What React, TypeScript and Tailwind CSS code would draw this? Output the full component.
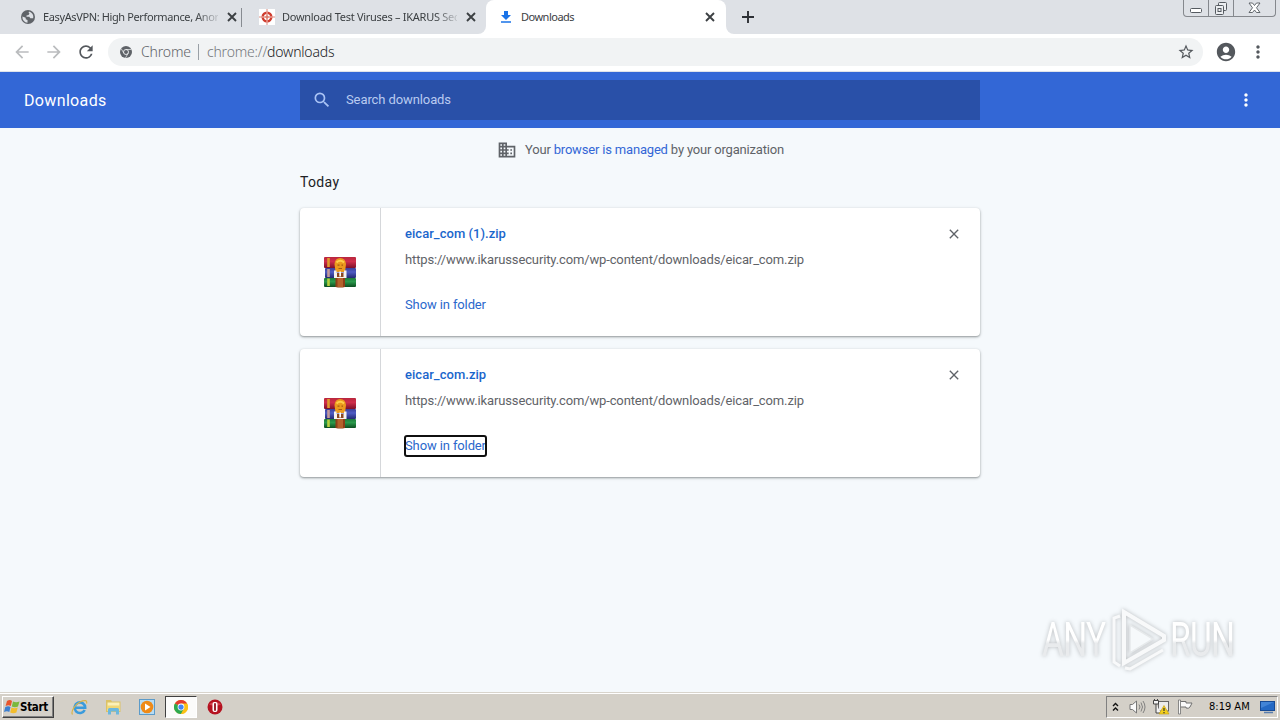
import React from 'react';
import {
  MdAccountCircle,
  MdArrowBack,
  MdArrowForward,
  MdClose,
  MdDomain,
  MdMoreVert,
  MdRefresh,
  MdSearch,
  MdStarBorder,
} from 'react-icons/md';

interface DownloadItem {
  name: string;
  url: string;
  focused?: boolean;
}

const downloads: DownloadItem[] = [
  {
    name: 'eicar_com (1).zip',
    url: 'https://www.ikarussecurity.com/wp-content/downloads/eicar_com.zip',
  },
  {
    name: 'eicar_com.zip',
    url: 'https://www.ikarussecurity.com/wp-content/downloads/eicar_com.zip',
    focused: true,
  },
];

function GlobeIcon() {
  return (
    <svg width="14" height="14" viewBox="0 0 14 14">
      <circle cx="7" cy="7" r="7" fill="#5f6368" />
      <path d="M8 1.500q-1 1.500.5 2l-1 1.500-2 .5v1.300h2.800l1 1.500h2.900A5.600 5.600 0 0 0 8 1.500z" fill="#dee1e6" />
      <path d="M1.400 6.500l3.300 1.200v1.500l1.800.8v2.700A5.600 5.600 0 0 1 1.400 6.500z" fill="#dee1e6" />
    </svg>
  );
}

function IkarusIcon() {
  return (
    <svg width="16" height="16" viewBox="0 0 16 16" fill="none">
      <rect width="16" height="16" fill="#fff" />
      <path d="M8 0v16M0 8h16" stroke="#dc8a7c" strokeWidth="1" />
      <circle cx="8" cy="8" r="4.300" stroke="#cf3c2e" strokeWidth="2.400" />
      <path d="M8 2.500v3M8 10.500v3M2.500 8h3M10.500 8h3" stroke="#f4cfc8" strokeWidth="1" />
      <path d="M8 5.500v5M5.500 8h5" stroke="#d9705f" strokeWidth="1" />
    </svg>
  );
}

function DownloadTabIcon() {
  return (
    <svg width="12" height="12" viewBox="0 0 12 12" fill="#1a73e8">
      <path d="M4 0h4v4h3L6 9 1 4h3zM1 10.300h10v1.500H1z" />
    </svg>
  );
}

function ChromeMono() {
  return (
    <svg width="12" height="12" viewBox="0 0 12 12">
      <circle cx="6" cy="6" r="6" fill="#5f6368" />
      <circle cx="6" cy="6" r="2.500" fill="none" stroke="#f1f3f4" strokeWidth="0.900" />
      <path d="M6 3.500h5.400M3.850 7.200L1.200 2.700M8.150 7.200L5.500 11.900" stroke="#f1f3f4" strokeWidth="0.700" />
    </svg>
  );
}

function ChromeColor() {
  return (
    <svg width="14" height="14" viewBox="0 0 24 24">
      <circle cx="12" cy="12" r="12" fill="#fbc116" />
      <path d="M12 12L1.600 6A12 12 0 0 1 22.400 6z" fill="#e33b2e" />
      <path d="M12 12L1.600 6A12 12 0 0 0 12 24l5-9z" fill="#2da94f" />
      <path d="M12 6h10.400A12 12 0 0 1 12 24l5.200-9z" fill="#fbc116" />
      <circle cx="12" cy="12" r="5.800" fill="#fff" />
      <circle cx="12" cy="12" r="4.500" fill="#4285f4" />
    </svg>
  );
}

function WinRarIcon() {
  return (
    <svg width="32" height="32" viewBox="0 0 32 32">
      <defs>
        <linearGradient id="rar-red" x2="0" y2="1">
          <stop stopColor="#b8263c" />
          <stop offset="0.4" stopColor="#d02f4c" />
          <stop offset="1" stopColor="#7d1028" />
        </linearGradient>
        <linearGradient id="rar-blue" x2="0" y2="1">
          <stop stopColor="#3a3f98" />
          <stop offset="0.4" stopColor="#4f5cc4" />
          <stop offset="1" stopColor="#222a72" />
        </linearGradient>
        <linearGradient id="rar-green" x2="0" y2="1">
          <stop stopColor="#1d7a3a" />
          <stop offset="0.4" stopColor="#2b9a4c" />
          <stop offset="1" stopColor="#0d4d20" />
        </linearGradient>
      </defs>
      <rect x="0" y="1" width="32" height="11" rx="1" fill="url(#rar-red)" />
      <rect x="1" y="12" width="31" height="10" rx="1" fill="url(#rar-blue)" />
      <rect x="0" y="22" width="32" height="9" rx="1" fill="url(#rar-green)" />
      <path d="M4.500 2v9" stroke="#e09a2c" strokeWidth="2.600" />
      <path d="M4.500 13v8" stroke="#c39a9a" strokeWidth="2.600" />
      <path d="M4.500 22.500v7.500" stroke="#b9cf3c" strokeWidth="2.600" />
      <path d="M11.500 20h9.500v11q-4.800 1-9.500 0z" fill="#8f3f18" />
      <path d="M13.500 22h5.500v9h-5.500z" fill="#b4622c" />
      <path d="M10.500 8q.5-6 5.700-6T22 8l-1 8h-9.500z" fill="#eb9a1e" />
      <path d="M12.500 6.500q3.700-3.500 7.500 0" stroke="#ffd04a" strokeWidth="2" fill="none" />
      <path d="M13.500 8.500h2v1.300h-2zM17.500 8.500h1.500v1.300h-1.500zM14.500 12h3.500v1h-3.500z" fill="#a55c10" />
      <path d="M10 14.500h2.500v2h7.500v-2h2.500V22H10z" fill="#f6f3f0" />
      <path d="M13 17h6.500v4H13z" fill="#8b4720" />
      <path d="M15.300 15.500H17v5h-1.700z" fill="#fff" />
    </svg>
  );
}

function TabCross() {
  return (
    <svg width="14" height="14" viewBox="0 0 14 14" stroke="#3c4043" strokeWidth="1.900" className="ml-[7px] shrink-0">
      <path d="M3 3l8 8M11 3l-8 8" />
    </svg>
  );
}

function Tab({
  icon,
  title,
  titleClass = '',
  className,
}: {
  icon: React.ReactNode;
  title: string;
  titleClass?: string;
  className: string;
}) {
  return (
    <div className={`flex h-[34px] items-center ${className}`}>
      <span className="flex w-4 shrink-0 justify-center">{icon}</span>
      <span className={`ml-[7px] w-[175px] shrink-0 whitespace-nowrap text-[11px] text-[#3c4043] ${titleClass}`}>
        {title}
      </span>
      <TabCross />
    </div>
  );
}

const fade = '[mask-image:linear-gradient(to_right,#000_153px,transparent_179px)]';

function TabStrip() {
  return (
    <div className="flex h-[34px] bg-white font-['Noto_Sans',sans-serif]">
      <Tab
        icon={<GlobeIcon />}
        title="EasyAsVPN: High Performance, Anon"
        titleClass={`tracking-[-0.38px] ${fade}`}
        className="w-[241px] bg-[#dee1e6] pl-5"
      />
      <div className="bg-[#dee1e6] pt-2">
        <div className="h-[19px] w-px bg-[#878b91]" />
      </div>
      <Tab
        icon={<IkarusIcon />}
        title="Download Test Viruses – IKARUS Sec"
        titleClass={`tracking-[-0.28px] ${fade}`}
        className="w-[244px] rounded-br-lg bg-[#dee1e6] pl-[17px]"
      />
      <div className="bg-[#dee1e6]">
        <Tab
          icon={<DownloadTabIcon />}
          title="Downloads"
          titleClass="tracking-[-0.5px]"
          className="w-60 rounded-t-lg bg-white pl-3"
        />
      </div>
      <div className="flex flex-1 rounded-bl-lg bg-[#dee1e6]">
        <svg width="18" height="18" viewBox="0 0 18 18" stroke="#2d3035" strokeWidth="1.900" className="ml-[13px] mt-2">
          <path d="M9 3v12M3 9h12" />
        </svg>
        <div className="ml-auto mr-1 flex h-[17px] rounded-b border border-t-0 border-[#85888d]">
          <div className="flex w-[25px] justify-center border-r border-[#85888d]">
            <svg width="13" height="16" viewBox="0 0 13 16" fill="#fff" stroke="#555a60">
              <rect x="0.500" y="8.500" width="11" height="4" rx="1" />
            </svg>
          </div>
          <div className="flex w-[25px] justify-center border-r border-[#85888d]">
            <svg width="14" height="16" viewBox="0 0 14 16" fill="#eceef1" stroke="#555a60">
              <rect x="4.500" y="2.500" width="8" height="8" rx="1" />
              <rect x="1.500" y="5.500" width="8" height="9" rx="1" />
              <rect x="4" y="8.500" width="3" height="3" />
            </svg>
          </div>
          <div className="flex w-[41px] justify-center">
            <svg width="13" height="16" viewBox="0 0 13 16" fill="#fff" stroke="#555a60" strokeWidth="0.900">
              <path d="M1 3h3.500L6.500 5.500 8.500 3H12L8.500 7.800 12 12.500H8.500L6.500 10l-2 2.500H1l3.500-4.700z" />
            </svg>
          </div>
        </div>
      </div>
    </div>
  );
}

function Toolbar() {
  return (
    <div className="flex h-[38px] items-center border-b border-[#dfe3ea] bg-white pb-[2px] pl-3 font-['Noto_Sans',sans-serif]">
      <MdArrowBack size={20} className="text-[#babcbe]" />
      <MdArrowForward size={20} className="ml-3 text-[#babcbe]" />
      <MdRefresh size={20} className="ml-3 text-[#54585d]" />
      <div className="ml-3 flex h-7 w-[1095px] items-center rounded-full bg-[#f1f3f4] pl-3 text-[14px] font-light">
        <ChromeMono />
        <span className="ml-[9px] w-[49px] whitespace-nowrap tracking-[-0.15px] text-[#5f6368]">Chrome</span>
        <span className="ml-2 h-4 w-px bg-[#9aa0a6]" />
        <span className="ml-2 whitespace-nowrap tracking-[-0.2px] text-[#74787c]">
          chrome://<span className="text-[#202124]">downloads</span>
        </span>
        <MdStarBorder size={18} className="ml-auto mr-2 text-[#54585d]" />
      </div>
      <MdAccountCircle size={22} className="ml-3 text-[#54585d]" />
      <MdMoreVert size={20} className="ml-[11px] text-[#54585d]" />
    </div>
  );
}

function DownloadCard({ item }: { item: DownloadItem }) {
  return (
    <div className="flex h-32 rounded bg-white shadow-[0_1px_2px_rgba(60,64,67,0.45),0_1px_3px_1px_rgba(60,64,67,0.1)]">
      <div className="flex w-[81px] items-center justify-center border-r border-[#d5d7da]">
        <WinRarIcon />
      </div>
      <div className="flex flex-1 flex-col items-start pl-6 pt-4 text-[13px] leading-5">
        <a className="font-medium tracking-[0.03px] text-[#1a66cc]">{item.name}</a>
        <span className="mt-[6px] whitespace-nowrap tracking-[-0.13px] text-[#5f6368]">{item.url}</span>
        <a
          className={`mt-[25px] whitespace-nowrap tracking-[-0.12px] text-[#2b68cc] ${item.focused ? 'rounded-[2px] outline-2 -outline-offset-1 outline-[#101010]' : ''}`}
        >
          Show in folder
        </a>
      </div>
      <MdClose size={16} className="mr-[18px] mt-[18px] text-[#5f6368]" />
    </div>
  );
}

function MarkText({ children }: { children: string }) {
  return (
    <span className="w-[64px]">
      <span className="inline-block origin-left scale-x-[0.7] bg-linear-to-b from-white from-50% to-[#e9ebed] to-55% bg-clip-text tracking-[-1px] text-transparent">
        {children}
      </span>
    </span>
  );
}

// semi-transparent overlay in the lower right corner
function AnyRunMark() {
  return (
    <div className="absolute right-[46px] top-[536px] flex h-16 items-center font-['Roboto',sans-serif] text-[48px] leading-[64px] [filter:drop-shadow(0_0_2px_rgba(0,0,0,0.25))]">
      <MarkText>ANY</MarkText>
      <svg width="60" height="64" viewBox="0 0 60 64" fill="none" stroke="#f8f9fa" strokeWidth="4" className="ml-[2px]">
        <path d="M12 8L6 10v44l6 4" strokeWidth="3" />
        <path d="M17 60l5 1 33-19" strokeWidth="3" />
        <path d="M16 4l40 24v4L16 55z" />
        <path d="M22 17v28l23-14z" strokeWidth="1.500" stroke="#e6e9eb" fill="#f6f9fb" />
      </svg>
      <span className="w-[2px]" />
      <MarkText>RUN</MarkText>
    </div>
  );
}

function DownloadsPage() {
  return (
    <div className="relative flex h-[620px] flex-col bg-[#f5f9fc] font-['Roboto',sans-serif]">
      <div className="flex h-14 shrink-0 items-center bg-[#3367d6] pl-6 text-white">
        <h1 className="w-[276px] pt-[2px] text-[16px] tracking-[0.35px]">Downloads</h1>
        <div className="flex h-10 w-[680px] items-center bg-[#2950a8] pl-3">
          <MdSearch size={20} className="text-[#a9c3f5]" />
          <span className="ml-[14px] text-[13px] tracking-[-0.1px] text-[#b9cbf0]">Search downloads</span>
        </div>
        <MdMoreVert size={20} className="ml-auto mr-6" />
      </div>
      <div className="mx-auto w-[680px]">
        <div className="flex h-11 items-center justify-center pl-px text-[13px] text-[#5f6368]">
          <MdDomain size={20} className="mr-2" />
          <span className="tracking-[-0.18px]">
            Your <a className="text-[#3367d6]">browser is managed</a> by your organization
          </span>
        </div>
        <h2 className="h-9 text-[14px] leading-[21px] tracking-[0.35px] text-[#202124]">Today</h2>
        <div className="flex flex-col gap-[13px]">
          {downloads.map((item) => (
            <DownloadCard key={item.name} item={item} />
          ))}
        </div>
      </div>
      <AnyRunMark />
    </div>
  );
}

function WindowsFlag() {
  return (
    <svg width="16" height="16" viewBox="0 0 16 16" className="shrink-0">
      <path d="M3 2q3-2 5 0L6.800 7Q4.500 5.500 1.600 7z" fill="#e8552c" />
      <path d="M9 2.500q3 1.500 6.500 0L14 7.500q-3 1.500-6.200 0z" fill="#7ab83c" />
      <path d="M1.300 8q3-1.500 5.200 0L5.300 13Q3 11.500 0 13z" fill="#3c7fd0" />
      <path d="M7.500 8.500q3 1.500 6.200 0L12.400 13.500q-3 1.500-6.200 0z" fill="#f3bd2c" />
    </svg>
  );
}

function InternetExplorerIcon() {
  return (
    <svg width="17" height="17" viewBox="0 0 17 17" fill="none">
      <path d="M13.700 11a5.300 5.300 0 1 1 .5-2.200H4.500" stroke="#3a9bdc" strokeWidth="2.600" />
      <path d="M1.500 15.500C-.5 12.500 4 5.500 9 3s7.500-1.500 6.500 1.500" stroke="#d9b44a" strokeWidth="1.200" />
    </svg>
  );
}

function ExplorerIcon() {
  return (
    <svg width="17" height="16" viewBox="0 0 17 16">
      <path d="M1 1h5l1 1.500h8.500V13H1z" fill="#dcc266" />
      <path d="M2.500 3.500h12V12h-12z" fill="#fbf0b8" />
      <path d="M2 6.500h13V10H2z" fill="#f0d777" />
      <path d="M3 15.500v-5Q3 9 4.500 9h8q1.500 0 1.500 1.500v5h-3v-3H6v3z" fill="#6bb7de" />
    </svg>
  );
}

function MediaPlayerIcon() {
  return (
    <svg width="17" height="17" viewBox="0 0 17 17">
      <rect x="0.500" y="0.500" width="15" height="15" fill="#b7dcf4" stroke="#5c9bc9" />
      <circle cx="8" cy="8" r="6.300" fill="#ef8a17" />
      <path d="M6 4.500L11.500 8 6 11.500z" fill="#fff" />
    </svg>
  );
}

function OperaIcon() {
  return (
    <svg width="16" height="16" viewBox="0 0 16 16">
      <circle cx="8" cy="8" r="7.500" fill="#b51220" />
      <path d="M2 5.500a7 5 0 0 1 12 0Q8 8 2 5.500" fill="#d2404c" />
      <rect x="5.500" y="3" width="5" height="10" rx="2" fill="#fff" />
      <rect x="7.100" y="4" width="1.800" height="8" rx="0.900" fill="#8e0d18" />
    </svg>
  );
}

function TrayIcons() {
  return (
    <>
      <svg width="7" height="10" viewBox="0 0 7 10" fill="none" stroke="#111" strokeWidth="1.400" className="ml-[5px]">
        <path d="M1 4l2.500-2.500L6 4M1 8.500L3.500 6 6 8.500" />
      </svg>
      <svg width="17" height="16" viewBox="0 0 17 16" fill="none" stroke="#777" className="ml-[10px]">
        <path d="M1 5.500h2.500L7.500 2v12L3.500 10.500H1z" fill="#fafafa" />
        <path d="M10 5.500q2 2.500 0 5M12 3.500q3 4.500 0 9M14 2q4 6 0 12" strokeWidth="0.900" />
      </svg>
      <svg width="17" height="16" viewBox="0 0 17 16" fill="none" className="ml-[7px]">
        <rect x="5.500" y="2.500" width="10" height="9.500" fill="#ececec" stroke="#666" />
        <path d="M0.500 1.500h5v3.500h-5zM1.500 0v2M4.500 0v2M3 5v9h5" fill="#f4f4f4" stroke="#444" />
        <path d="M11 6.500l5 8.500H6z" fill="#f2cf1c" stroke="#c49a0a" strokeWidth="0.600" />
        <path d="M11 9v3M11 13v1.200" stroke="#333" strokeWidth="1.200" />
      </svg>
      <svg width="17" height="16" viewBox="0 0 17 16" fill="#fafafa" stroke="#707070" className="ml-[7px]">
        <path d="M3.500 2.500h5.500v1.500h6l-2 4q-1.500 2-4 1V8H3.500" />
        <path d="M1.500 1h2v14h-2z" strokeWidth="0.800" />
      </svg>
    </>
  );
}

function Taskbar() {
  return (
    <div className="flex h-[28px] items-center border-t border-[#d8d4cc] bg-[#d4d0c8] pt-px shadow-[inset_0_1px_0_#fff]">
      <div className="ml-[2px] flex h-[22px] w-[52px] items-center border border-b-[#404040] border-l-white border-r-[#404040] border-t-white pl-px font-['DejaVu_Sans_Condensed','DejaVu_Sans',sans-serif] text-[11.500px] font-bold tracking-[-0.300px] text-black shadow-[inset_-1px_-1px_#808080]">
        <WindowsFlag />
        <span className="pt-px">Start</span>
      </div>
      <span className="ml-[17px]"><InternetExplorerIcon /></span>
      <span className="ml-[17px]"><ExplorerIcon /></span>
      <span className="ml-[17px]"><MediaPlayerIcon /></span>
      <div className="ml-[9px] flex h-[22px] w-8 items-center justify-center border border-b-white border-l-[#404040] border-r-white border-t-[#404040] bg-[#fbfbfa]">
        <ChromeColor />
      </div>
      <span className="ml-[10px]"><OperaIcon /></span>
      <div className="ml-auto mr-[2px] flex h-[22px] w-[172px] items-center border border-b-white border-l-[#808080] border-r-white border-t-[#808080]">
        <TrayIcons />
        <span className="ml-[15px] w-[42px] whitespace-nowrap pt-px font-['DejaVu_Sans_Condensed','DejaVu_Sans',sans-serif] text-[11px] text-black">
          8:19 AM
        </span>
        <svg width="15" height="14" viewBox="0 0 15 14" className="ml-[9px]">
          <rect x="0.500" y="1.500" width="14" height="9" fill="#2469c4" stroke="#174a94" />
          <path d="M1 2h13L1 8z" fill="#4284d6" />
          <path d="M4 12.500h9" stroke="#5a7eae" strokeWidth="1.500" />
        </svg>
      </div>
    </div>
  );
}

export default function App() {
  return (
    <div className="flex h-[720px] w-[1280px] flex-col overflow-hidden bg-white">
      <TabStrip />
      <Toolbar />
      <DownloadsPage />
      <Taskbar />
    </div>
  );
}
